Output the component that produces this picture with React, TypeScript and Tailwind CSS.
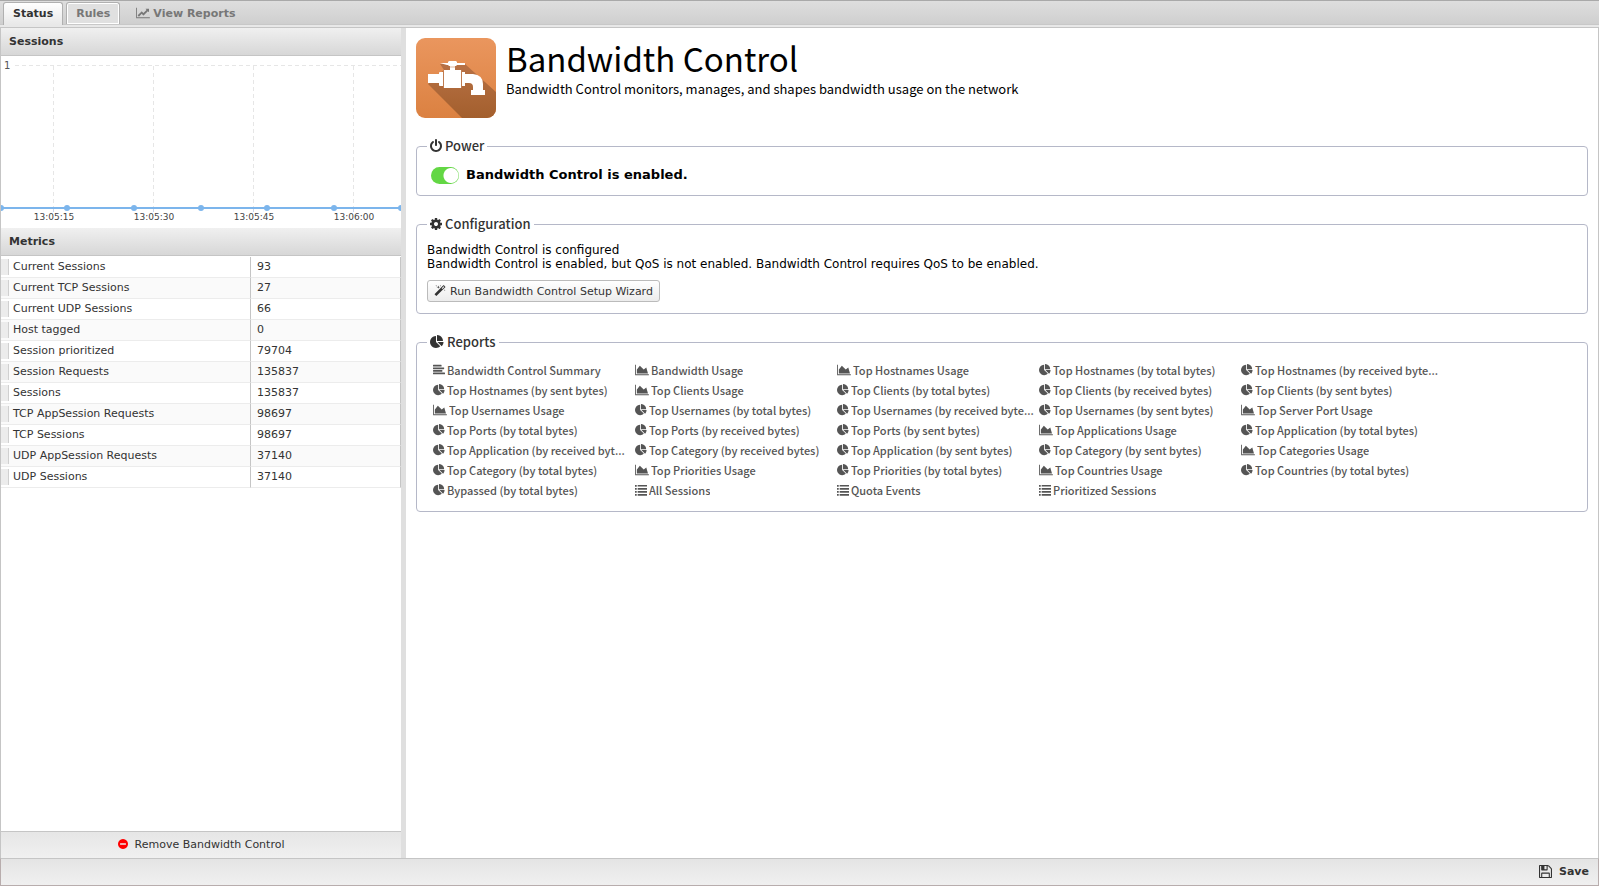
import React from "react";

const PATHS = {
  pie: "M768 890l546 546q-106 108-247.500 168t-298.500 60q-209 0-385.500-103t-279.500-279.500-103-385.500 103-385.500 279.500-279.500 385.500-103v762zm187 6h773q0 157-60 298.500t-168 247.500zm709-128h-768v-768q209 0 385.500 103t279.500 279.500 103 385.500z",
  area: "M2048 1536v128h-2048v-1536h128v1408h1920zm-384-1024l256 896h-1664v-576l448-576 576 576z",
  line: "M2048 1536v128h-2048v-1536h128v1408h1920zm-128-1248v435q0 21-19.500 29.500t-35.500-7.500l-121-121-633 633q-10 10-23 10t-23-10l-233-233-416 416-192-192 585-585q10-10 23-10t23 10l233 233 464-464-121-121q-16-16-7.500-35.500t29.500-19.500h435q14 0 23 9t9 23z",
  align: "M1792 1344v128q0 26-19 45t-45 19h-1664q-26 0-45-19t-19-45v-128q0-26 19-45t45-19h1664q26 0 45 19t19 45zm-384-384v128q0 26-19 45t-45 19h-1280q-26 0-45-19t-19-45v-128q0-26 19-45t45-19h1280q26 0 45 19t19 45zm256-384v128q0 26-19 45t-45 19h-1536q-26 0-45-19t-19-45v-128q0-26 19-45t45-19h1536q26 0 45 19t19 45zm-384-384v128q0 26-19 45t-45 19h-1152q-26 0-45-19t-19-45v-128q0-26 19-45t45-19h1152q26 0 45 19t19 45z",
  list: "M0 150h256v256h-256zM400 150h1392v240h-1392zM0 600h256v256h-256zM400 600h1392v240h-1392zM0 1050h256v256h-256zM400 1050h1392v240h-1392zM0 1500h256v256h-256zM400 1500h1392v240h-1392z",
  power: "M1664 896q0 156-61 298t-164 245-245 164-298 61-298-61-245-164-164-245-61-298q0-182 80.500-343t226.500-270q43-32 95.500-25t83.500 50q32 42 24.500 94.500t-49.500 84.500q-98 74-151.500 181t-53.500 228q0 104 40.500 198.500t109.500 163.500 163.500 109.500 198.500 40.500 198.500-40.500 163.500-109.500 109.500-163.500 40.500-198.500q0-121-53.500-228t-151.500-181q-42-32-49.500-84.500t24.500-94.500q31-43 84-50t95 25q146 109 226.500 270t80.500 343zm-640-768v640q0 52-38 90t-90 38-90-38-38-90v-640q0-52 38-90t90-38 90 38 38 90z",
  cog: "M1152 896q0-106-75-181t-181-75-181 75-75 181 75 181 181 75 181-75 75-181zm512-109v222q0 12-8 23t-20 13l-185 28q-19 54-39 91 35 50 107 138 10 12 10 25t-9 23q-27 37-99 108t-94 71q-12 0-26-9l-138-108q-44 23-91 38-16 136-29 186-7 28-36 28h-222q-14 0-24.500-8.500t-11.500-21.500l-28-184q-49-16-90-37l-141 107q-10 9-25 9-14 0-25-11-126-114-165-168-7-10-7-23 0-12 8-23 15-21 51-66.500t54-70.500q-27-50-41-99l-183-27q-13-2-21-12.500t-8-23.500v-222q0-12 8-23t19-13l186-28q14-46 39-92-40-57-107-138-10-12-10-24 0-10 9-23 26-36 98.500-107.500t94.500-71.500q13 0 26 10l138 107q44-23 91-38 16-136 29-186 7-28 36-28h222q14 0 24.500 8.500t11.500 21.500l28 184q49 16 90 37l142-107q9-9 24-9 13 0 25 10 129 119 165 170 7 8 7 22 0 12-8 23-15 21-51 66.500t-54 70.500q26 50 41 98l183 28q13 2 21 12.500t8 23.500z",
  magic: "M1254 581l293-293-107-107-293 293zm447-293q0 27-18 45l-1286 1286q-18 18-45 18t-45-18l-198-198q-18-18-18-45t18-45l1286-1286q18-18 45-18t45 18l198 198q18 18 18 45zm-1351-190l98 30-98 30-30 98-30-98-98-30 98-30 30-98zm350 162l196 60-196 60-60 196-60-196-196-60 196-60 60-196zm930 478l98 30-98 30-30 98-30-98-98-30 98-30 30-98zm-640-640l98 30-98 30-30 98-30-98-98-30 98-30 30-98z",
  minus: "M1344 960v-128q0-26-19-45t-45-19h-768q-26 0-45 19t-19 45v128q0 26 19 45t45 19h768q26 0 45-19t19-45zm320-64q0 209-103 385.500t-279.500 279.500-385.500 103-385.500-103-279.500-279.500-103-385.500 103-385.500 279.500-279.500 385.500-103 385.500 103 279.500 279.500 103 385.500z",
  save: "M512 1536h768v-384h-768v384zm896 0h128v-896q0-14-10-38.500t-20-34.500l-281-281q-10-10-34-20t-39-10v416q0 40-28 68t-68 28h-576q-40 0-68-28t-28-68v-416h-128v1280h128v-416q0-40 28-68t68-28h832q40 0 68 28t28 68v416zm-384-928v-320q0-13-9.500-22.500t-22.500-9.500h-192q-13 0-22.500 9.500t-9.500 22.500v320q0 13 9.500 22.500t22.500 9.500h192q13 0 22.500-9.500t9.500-22.500zm640 32v928q0 40-28 68t-68 28h-1344q-40 0-68-28t-28-68v-1344q0-40 28-68t68-28h928q40 0 88 20t76 48l280 280q28 28 48 76t20 88z",
};

type IconName = keyof typeof PATHS;

const VIEW: Record<IconName, string> = {
  pie: "0 0 1792 1792",
  area: "0 0 2048 1792",
  line: "0 0 2048 1792",
  align: "0 0 1792 1792",
  list: "0 0 1792 1792",
  power: "128 0 1536 1792",
  cog: "128 0 1536 1792",
  magic: "64 0 1664 1792",
  minus: "128 128 1536 1536",
  save: "128 128 1536 1536",
};

function Icon({ name, className }: { name: IconName; className: string }) {
  return (
    <svg viewBox={VIEW[name]} className={"shrink-0 fill-current " + className} aria-hidden="true">
      <path d={PATHS[name]} />
    </svg>
  );
}

const METRICS: [string, string][] = [
  ["Current Sessions", "93"],
  ["Current TCP Sessions", "27"],
  ["Current UDP Sessions", "66"],
  ["Host tagged", "0"],
  ["Session prioritized", "79704"],
  ["Session Requests", "135837"],
  ["Sessions", "135837"],
  ["TCP AppSession Requests", "98697"],
  ["TCP Sessions", "98697"],
  ["UDP AppSession Requests", "37140"],
  ["UDP Sessions", "37140"],
];

const REPORTS: [IconName, string][] = [
  ["align", "Bandwidth Control Summary"],
  ["area", "Bandwidth Usage"],
  ["area", "Top Hostnames Usage"],
  ["pie", "Top Hostnames (by total bytes)"],
  ["pie", "Top Hostnames (by received byte..."],
  ["pie", "Top Hostnames (by sent bytes)"],
  ["area", "Top Clients Usage"],
  ["pie", "Top Clients (by total bytes)"],
  ["pie", "Top Clients (by received bytes)"],
  ["pie", "Top Clients (by sent bytes)"],
  ["area", "Top Usernames Usage"],
  ["pie", "Top Usernames (by total bytes)"],
  ["pie", "Top Usernames (by received byte..."],
  ["pie", "Top Usernames (by sent bytes)"],
  ["area", "Top Server Port Usage"],
  ["pie", "Top Ports (by total bytes)"],
  ["pie", "Top Ports (by received bytes)"],
  ["pie", "Top Ports (by sent bytes)"],
  ["area", "Top Applications Usage"],
  ["pie", "Top Application (by total bytes)"],
  ["pie", "Top Application (by received byt..."],
  ["pie", "Top Category (by received bytes)"],
  ["pie", "Top Application (by sent bytes)"],
  ["pie", "Top Category (by sent bytes)"],
  ["area", "Top Categories Usage"],
  ["pie", "Top Category (by total bytes)"],
  ["area", "Top Priorities Usage"],
  ["pie", "Top Priorities (by total bytes)"],
  ["area", "Top Countries Usage"],
  ["pie", "Top Countries (by total bytes)"],
  ["pie", "Bypassed (by total bytes)"],
  ["list", "All Sessions"],
  ["list", "Quota Events"],
  ["list", "Prioritized Sessions"],
];

const ICON_WIDTH: Partial<Record<IconName, string>> = {
  pie: "h-3 w-3",
  align: "h-3 w-3",
  list: "h-3 w-3",
  area: "h-3 w-3.5",
};

function PanelHeader({ title }: { title: string }) {
  return (
    <h2 className="flex h-7 shrink-0 items-center border-b border-[#c5c5c5] bg-linear-to-b from-[#f0f0f0] to-[#d7d7d7] px-2 text-[11px] leading-[13px] font-bold text-[#333]">
      {title}
    </h2>
  );
}

function SessionsChart() {
  const ticks = [
    { x: 52, label: "13:05:15" },
    { x: 152, label: "13:05:30" },
    { x: 252, label: "13:05:45" },
    { x: 352, label: "13:06:00" },
  ];
  const points = [0, 66, 133, 200, 266, 333, 400];
  return (
    <svg viewBox="0 0 400 172" className="block w-full" role="img" aria-label="Sessions">
      <path d="M14 9.500H400" stroke="#e6e6e6" strokeDasharray="4 3" />
      {ticks.map((t) => (
        <g key={t.x}>
          <path d={`M${t.x + 0.5} 10V151`} stroke="#e6e6e6" strokeDasharray="4 3" />
          <path d={`M${t.x + 0.5} 152v4`} stroke="#ccd6eb" />
          <text x={t.x + 1} y="164" textAnchor="middle" fontSize="9" fill="#444">
            {t.label}
          </text>
        </g>
      ))}
      <text x="3" y="13" fontSize="10" fill="#555">1</text>
      <path d="M0 152H400" stroke="#7cb5ec" strokeWidth="2" />
      {points.map((x) => (
        <circle key={x} cx={x} cy="152" r="3" fill="#7cb5ec" />
      ))}
    </svg>
  );
}

function Legend({ icon, size, children }: { icon: IconName; size: string; children: string }) {
  return (
    <legend className="flex h-5 items-center gap-[3px] px-[3px] font-['Noto_Sans_CJK_SC',sans-serif] text-[13px] leading-5 font-medium text-[#333]">
      <Icon name={icon} className={size} />
      <span>{children}</span>
    </legend>
  );
}

function FaucetLogo() {
  return (
    <svg viewBox="0 0 80 80" className="h-20 w-20 shrink-0" aria-hidden="true">
      <defs>
        <linearGradient id="tile" x1="0" y1="0" x2="0" y2="1">
          <stop offset="0" stopColor="#ea965e" />
          <stop offset="1" stopColor="#db8141" />
        </linearGradient>
        <linearGradient id="shade" x1="0" y1="0" x2="0" y2="1">
          <stop offset="0" stopColor="#b87145" />
          <stop offset="1" stopColor="#a35f2d" />
        </linearGradient>
        <clipPath id="round">
          <rect width="80" height="80" rx="9" />
        </clipPath>
      </defs>
      <g clipPath="url(#round)">
        <rect width="80" height="80" fill="url(#tile)" />
        <path d="M24 26H49L80 54V80H46L12 46L28 32z" fill="url(#shade)" />
        <g fill="#fff">
          <path d="M24 25h8v-1l1-1h7l1 1v1h8v2h-8l-1 1h-1v4h-5v-4h-1l-1-1h-1z" />
          <path d="M28 32h17v18h-17z" />
          <path d="M12 36h11v-1q0-1 1-1h3v14h-3q-1 0-1-1v-2h-11z" />
          <path d="M46 34h3v2h8q10 1 10 10v6h2v5h-14v-5h2v-3q0-4-4-4h-4v3h-3z" />
        </g>
        <path d="M27.500 32v18M45.500 32v18M33.500 29h6" stroke="#c9875c" strokeWidth=".6" fill="none" />
      </g>
    </svg>
  );
}

export default function App() {
  return (
    <div className="flex min-h-screen flex-col bg-white font-['DejaVu_Sans',sans-serif] text-[11px] leading-[13px] text-[#333]">
      <nav className="flex h-7 shrink-0 flex-col border-t border-b border-t-[#a9a9a9] border-b-[#c5c5c5] bg-[#e8e8e8]">
        <div className="flex h-6 items-end gap-[3px] border-b border-[#c8c8c8] bg-linear-to-b from-[#dedede] to-[#cfcfcf] pl-[3px] font-bold">
          <button className="-mb-px h-[23px] rounded-t-[3px] border border-b-0 border-[#b0b0b0] bg-linear-to-b from-white to-[#e8e8e8] px-[9px] pb-0.5 text-[#333]">
            Status
          </button>
          <button className="h-[22px] rounded-t-[3px] border border-b-0 border-[#b0b0b0] bg-[#e0e0e0] px-[9px] text-[#777] shadow-[inset_0_0_0_1px_#fff]">
            Rules
          </button>
          <button className="flex h-[22px] items-center gap-[3px] px-[13px] text-[#777]">
            <Icon name="line" className="h-3 w-[14px]" />
            View Reports
          </button>
        </div>
      </nav>

      <div className="flex grow border-x border-[#c5c5c5]">
        <aside className="flex w-100 shrink-0 flex-col">
          <PanelHeader title="Sessions" />
          <SessionsChart />
          <PanelHeader title="Metrics" />
          <table className="mt-px w-full table-fixed border-separate border-spacing-0">
            <tbody>
              {METRICS.map(([name, value]) => (
                <tr key={name} className="h-[21px] even:bg-[#fafafa]">
                  <td className="w-2 border-b border-[#ececec] p-0">
                    <div className="h-4 border-r border-[#d0d0d0] bg-[#ececec]" />
                  </td>
                  <th scope="row" className="border-r border-b border-r-[#c5c5c5] border-b-[#ececec] px-1 pt-0 pb-0.5 text-left font-normal">
                    {name}
                  </th>
                  <td className="w-[150px] border-r border-b border-r-[#c5c5c5] border-b-[#ececec] px-1.5 pt-0 pb-0.5">{value}</td>
                </tr>
              ))}
            </tbody>
          </table>
          <div className="grow" />
          <button className="flex h-[27px] shrink-0 items-center justify-center gap-[7px] border-t border-[#c5c5c5] bg-linear-to-b from-[#e6e6e6] to-[#f0f0f0] pb-0.5">
            <Icon name="minus" className="h-[10px] w-[10px] text-[#f00]" />
            Remove Bandwidth Control
          </button>
        </aside>
        <div className="w-[5px] shrink-0 bg-[#dfdfdf]" />

        <main className="flex min-w-0 grow flex-col px-[10px] pt-[10px]">
          <header className="flex gap-[10px]">
            <FaucetLogo />
            <div className="font-['Noto_Sans_CJK_SC',sans-serif] text-black">
              <h1 className="text-[33px] leading-[40px]">Bandwidth Control</h1>
              <p className="text-[13px] leading-[22px]">
                Bandwidth Control monitors, manages, and shapes bandwidth usage on the network
              </p>
            </div>
          </header>

          <fieldset className="mt-[18px] rounded-[4px] border border-[#b5b8c8] px-[10px] pb-px">
            <Legend icon="power" size="h-[14px] w-3">Power</Legend>
            <label className="flex h-[38px] items-center gap-[7px] pl-1 text-[13px] leading-4 font-bold text-black">
              <input
                type="checkbox"
                defaultChecked
                className="h-[17px] w-7 appearance-none rounded-full bg-[#63d744] bg-[radial-gradient(circle_at_20px_50%,white_7px,transparent_8px)]"
              />
              Bandwidth Control is enabled.
            </label>
          </fieldset>

          <fieldset className="mt-[18px] rounded-[4px] border border-[#b5b8c8] px-[10px] pb-[11px]">
            <Legend icon="cog" size="h-[14px] w-3">Configuration</Legend>
            <p className="pt-[9px] text-[12px] leading-[14px] text-black">
              Bandwidth Control is configured
              <br />
              Bandwidth Control is enabled, but QoS is not enabled. Bandwidth Control requires QoS to be enabled.
            </p>
            <button className="mt-[9px] flex h-[22px] items-center gap-1 rounded-[3px] border border-[#bbb] bg-linear-to-b from-white to-[#ececec] px-[6px]">
              <Icon name="magic" className="h-3 w-3" />
              Run Bandwidth Control Setup Wizard
            </button>
          </fieldset>

          <fieldset className="mt-[18px] min-w-0 rounded-[4px] border border-[#b5b8c8] px-[10px] pb-[11px]">
            <Legend icon="pie" size="h-[14px] w-[14px]">Reports</Legend>
            <ul className="grid grid-cols-[repeat(5,202px)] pt-2 pl-[6px] font-['Noto_Sans_CJK_SC',sans-serif] text-[11px] leading-5 font-medium text-[#555]">
              {REPORTS.map(([icon, name]) => (
                <li key={name} className="pr-1">
                  <a href="#" className="flex h-5 items-center gap-0.5">
                    <Icon name={icon} className={ICON_WIDTH[icon] ?? "h-3 w-3"} />
                    <span className="truncate">{name}</span>
                  </a>
                </li>
              ))}
            </ul>
          </fieldset>
        </main>
      </div>

      <footer className="flex h-7 shrink-0 items-center justify-end border border-[#b8adad] border-t-[#c5c5c5] bg-linear-to-b from-[#e4e4e4] to-[#f0f0f0] pr-[9px] pb-0.5">
        <button className="flex items-center gap-[7px] font-bold">
          <Icon name="save" className="h-[13px] w-[13px]" />
          Save
        </button>
      </footer>
    </div>
  );
}
